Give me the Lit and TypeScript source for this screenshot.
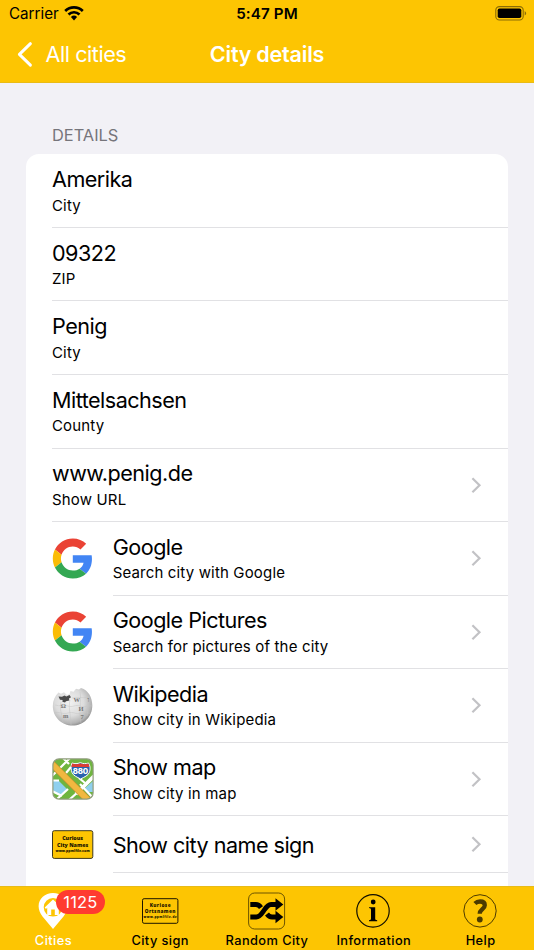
import { LitElement, html, css, nothing } from "lit";
import { customElement, property } from "lit/decorators.js";

interface Row {
  title: string;
  sub?: string;
  icon?: string;
  link?: boolean;
}

const ROWS: Row[] = [
  { title: "Amerika", sub: "City" },
  { title: "09322", sub: "ZIP" },
  { title: "Penig", sub: "City" },
  { title: "Mittelsachsen", sub: "County" },
  { title: "www.penig.de", sub: "Show URL", link: true },
  { title: "Google", sub: "Search city with Google", icon: "google", link: true },
  { title: "Google Pictures", sub: "Search for pictures of the city", icon: "google", link: true },
  { title: "Wikipedia", sub: "Show city in Wikipedia", icon: "wiki", link: true },
  { title: "Show map", sub: "Show city in map", icon: "map", link: true },
  { title: "Show city name sign", icon: "sign", link: true },
];

const google = html`<svg width="42" height="42" viewBox="0 0 42 42">
  <g transform="translate(.8 .5) scale(.8333)">
    <path fill="#EA4335" d="M24 9.5c3.54 0 6.71 1.22 9.21 3.6l6.85-6.85C35.9 2.38 30.47 0 24 0 14.62 0 6.51 5.38 2.56 13.22l7.98 6.19C12.43 13.72 17.74 9.5 24 9.5z"/>
    <path fill="#4285F4" d="M46.98 24.55c0-1.57-.15-3.09-.38-4.55H24v9.02h12.94c-.58 2.96-2.26 5.48-4.78 7.18l7.73 6c4.51-4.18 7.09-10.36 7.09-17.65z"/>
    <path fill="#FBBC05" d="M10.53 28.59c-.48-1.45-.76-2.99-.76-4.59s.27-3.14.76-4.59l-7.98-6.19C.92 16.46 0 20.12 0 24c0 3.88.92 7.54 2.56 10.78l7.97-6.19z"/>
    <path fill="#34A853" d="M24 48c6.48 0 11.93-2.13 15.89-5.81l-7.73-6c-2.15 1.45-4.92 2.3-8.16 2.3-6.26 0-11.57-4.22-13.47-9.91l-7.98 6.19C6.51 42.62 14.62 48 24 48z"/>
  </g>
</svg>`;

const wiki = html`<svg width="42" height="42" viewBox="0 0 42 42">
  <defs>
    <radialGradient id="globe" cx=".42" cy=".38" r=".66">
      <stop offset="0" stop-color="#f2f2f2"/><stop offset=".55" stop-color="#dcdcdc"/>
      <stop offset=".85" stop-color="#b4b4b4"/><stop offset="1" stop-color="#858585"/>
    </radialGradient>
  </defs>
  <path fill="url(#globe)" d="M6.500 7.500 9 8.800l3-1.500 3 2.600 2.500-.9 1-3 3 .8 2.500-3 3 .8 2-1.500C36.500 5.500 40.300 12.500 40.300 20.500 40.300 32 31.500 40.600 20.600 40.600S.8 32 .8 21C.8 15.500 3 11 6.500 7.500z"/>
  <g fill="none" stroke="#c4c4c4" stroke-width=".5">
    <path d="M3 20c5 2 9-1 13 1s8-2 12 0 8-1 12 0M2 28c5-2 9 2 14 0s8 2 13 0 7 1 10 0M9 17c-2 7 1 11 2 21M18 15c-2 8 1 16 1 25M28 7c2 8-2 20 1 31M35 11c2 6 1 13 0 20M20 13c5-2 10 1 17-1"/>
  </g>
  <path fill="#4b4b4b" d="m6.500 11.500 3.500.3 2.500-1.300 1.800 1 3.200-1.500 1.500 2.200-2 1.200.3 2.200-3.300.6-1 1.200-2.600-.6.2-1.700-2.600-.4z"/>
  <g class="glyphs">
    <text x="8.800" y="23">Ω</text><text x="21.500" y="17">W</text><text x="26.500" y="26">И</text>
    <text x="11" y="32.500">m</text><text x="28.500" y="34">7</text><text x="35.500" y="17">ו</text>
  </g>
</svg>`;

const map = html`<svg width="42" height="42" viewBox="0 0 42 42">
  <defs><clipPath id="tile"><rect x="1" y="1" width="40" height="40" rx="6"/></clipPath></defs>
  <g clip-path="url(#tile)">
    <rect width="42" height="42" fill="#6fb53f"/>
    <path fill="#8fd0ee" d="M0 22h6l9 9-6 6-9-4zM32 31l10-9v12h-7z"/>
    <g fill="none" stroke="#fff" stroke-width="2.200">
      <path d="M0 18 18 0M0 22.500h7M16 31 4 42M0 33l10 5M11 0l6 6M17 42l9-8M19 9l-5 6M28 26l14 15M27 20l6 5"/>
      <path stroke-width="3.800" d="M24 36 42 18"/>
    </g>
    <path stroke="#c58f2c" stroke-width="7" d="M-2 4 39 45"/>
    <path stroke="#f0b840" stroke-width="5.800" d="M-2 4 39 45"/>
  </g>
  <rect x=".9" y=".9" width="40.200" height="40.200" rx="6.200" fill="none" stroke="#8f9c7c" stroke-width="1.200"/>
  <path fill="#2b62ad" stroke="#fff" stroke-width="1" d="M20 5c3 1 5 .8 8.400-.3 3 1.100 5.400 1.300 8.100.3 2.500 4 1.500 7.500.8 9.500-1 3-5 4.500-8.700 6.500-3.600-2-7.400-3.300-8.600-6.500-.9-3-1.500-5.500 0-9.500z"/>
  <path fill="#dc3d34" d="M20.300 5.600c2.800.9 5.200.8 8.100-.2 2.700 1 5.300 1.100 7.900.2.600 1.100.9 2.200 1 3.400H19.400c.1-1.200.4-2.300.9-3.400z"/>
  <text class="route" x="28.300" y="15.800">880</text>
</svg>`;

const sign = html`<svg width="42" height="30" viewBox="0 0 42 30">
  <rect x=".5" y=".7" width="40.300" height="27.700" rx="1.800" fill="#fdc502" stroke="#3c381e" stroke-width="1"/>
  <g class="plate"><text x="20.600" y="9.700">Curious</text><text x="20.600" y="16.500">City Names</text><text class="url" x="20.600" y="22.200">www.ppmlfile.com</text></g>
</svg>`;

const ICONS: Record<string, unknown> = { google, wiki, map, sign };

const TABS = [
  {
    label: "Cities",
    badge: "1125",
    icon: html`<svg width="36" height="40" viewBox="0 0 36 40">
      <path fill="#fff" fill-rule="evenodd" d="M18 3C10 3 3.600 8.600 3.600 16.200c0 3.500 1.500 6.900 3.900 10.200L18 39l10.500-12.600c2.400-3.300 3.900-6.700 3.900-10.200C32.400 8.600 26 3 18 3zm0 5a9.300 9.300 0 1 1 0 18.600A9.300 9.300 0 0 1 18 8z"/>
      <path fill="#fff" d="m18 9.400-8.300 8.200 1.300 1.300 1.200-1.100v7.200h4v-5.500h3.600v5.500h4v-7.200l1.200 1.100 1.300-1.300-3-3.100v-3.700h-2.300v1.500z"/>
    </svg>`,
  },
  {
    label: "City sign",
    icon: html`<svg width="38" height="40" viewBox="0 0 38 40">
      <rect x="1.500" y="8.700" width="35.400" height="24.600" rx="1.600" fill="none" stroke="#1c1600" stroke-width="1"/>
      <g class="plate small"><text x="19.300" y="17">Kuriose</text><text x="19.300" y="22.500">Ortsnamen</text><text class="url" x="19.300" y="28">www.ppmlfile.de</text></g>
    </svg>`,
  },
  {
    label: "Random City",
    icon: html`<svg width="40" height="40" viewBox="0 0 40 40">
      <rect x="1.600" y="3" width="36" height="36" rx="6" fill="none" stroke="#5b4700" stroke-width=".9"/>
      <path fill="none" stroke="#000" stroke-width="4.800" d="M3.300 27h5.900c3.200 0 5.200-2.800 7.300-5.900s4.100-6.600 7.500-6.600h6.700M3.300 14.500h5.600c2.200 0 3.700 1.100 5.100 3.100M20 24c1.400 2 2.800 3 5 3h5.700"/>
      <path d="m28.500 8.300 7.800 6.200-7.800 6.200zm0 12.500 7.800 6.200-7.800 6.200z"/>
    </svg>`,
  },
  {
    label: "Information",
    icon: html`<svg width="40" height="40" viewBox="0 0 40 40">
      <circle cx="19" cy="20.900" r="16.200" fill="none" stroke="#100d00" stroke-width="1.200"/>
      <circle cx="19.200" cy="12" r="2.400"/>
      <path d="M15 17.200h6.200v11.400c0 1.200.4 1.500 2 1.700v.9H15v-.9c1.500-.2 2-.5 2-1.700v-8.600c0-1.300-.5-1.700-2-1.900z"/>
    </svg>`,
  },
  {
    label: "Help",
    icon: html`<svg width="40" height="40" viewBox="0 0 40 40">
      <circle cx="19" cy="20.900" r="16.200" fill="none" stroke="#4b3a00" stroke-width="1"/>
      <path fill="none" stroke="#4b3a00" stroke-width="4.300" d="M13.900 13.600c1.600-1.600 3.200-2.100 5.200-2.100 3.200 0 4.700 1.500 4.700 3.700 0 3.900-5.100 4.100-5.100 8.600"/>
      <circle cx="18.800" cy="29.500" r="2.900" fill="#4b3a00"/>
    </svg>`,
  },
];

const BASE = css`
  * { box-sizing: border-box; }
  svg { display: block; flex: none; overflow: visible; }
  svg text { font-family: "Open Sans", Inter, sans-serif; }
  .plate { text-anchor: middle; font-size: 5.3px; font-weight: 800; fill: #1c1600; }
  .plate.small { font-size: 4.7px; }
  .plate .url { font-size: 3.5px; }
  .plate.small .url { font-size: 3.1px; }
`;

@customElement("detail-row")
class DetailRow extends LitElement {
  @property({ attribute: false }) row!: Row;

  static styles = [
    BASE,
    css`
      :host { display: flex; padding-left: 26px; align-items: stretch; height: 73.55px; }
      :host([short]) { height: 57px; }
      .icon { width: 60.7px; flex: none; display: flex; align-items: center; }
      .body { flex: 1; display: flex; align-items: center; border-bottom: 1px solid #e1e1e4; padding-right: 26.5px; }
      .texts { flex: 1; padding-top: 0.5px; }
      .title { font-size: 21.6px; line-height: 26px; letter-spacing: -0.52px; white-space: nowrap; }
      .sub { font-size: 15px; line-height: 20px; letter-spacing: 0.16px; margin-top: 3.5px; white-space: nowrap; }
      .glyphs { font-size: 6.5px; font-weight: 600; fill: #777; }
      .glyphs text { font-family: "Liberation Serif", "Noto Sans", serif; }
      .route { font-family: Inter, sans-serif; font-size: 7.8px; font-weight: 800; fill: #fff; text-anchor: middle; letter-spacing: -0.2px; }
    `,
  ];

  render() {
    const r = this.row;
    return html`
      ${r.icon ? html`<div class="icon">${ICONS[r.icon]}</div>` : nothing}
      <div class="body">
        <div class="texts">
          <div class="title">${r.title}</div>
          ${r.sub ? html`<div class="sub">${r.sub}</div>` : nothing}
        </div>
        ${r.link
          ? html`<svg width="12" height="18" viewBox="0 0 12 18"><path d="m2.400 2.200 7.100 7-7.100 7" fill="none" stroke="#c2c2c5" stroke-width="2.200"/></svg>`
          : nothing}
      </div>
    `;
  }
}

@customElement("app-root")
class AppRoot extends LitElement {
  static styles = [
    BASE,
    css`
      :host {
        display: flex; flex-direction: column; height: 950px; overflow: hidden;
        background: #f2f1f6; color: #000; font-family: Inter, "Liberation Sans", sans-serif;
      }
      header { background: #fdc502; height: 83px; flex: none; border-bottom: 1px solid #eabb14; }
      .status { display: grid; grid-template-columns: 1fr auto 1fr; align-items: center; height: 27px; padding: 0 7px 0 9px; font-size: 15.2px; }
      .carrier { display: flex; align-items: center; gap: 5px; }
      .time { font-weight: 600; letter-spacing: 0.1px; margin-right: 2px; }
      .battery { justify-self: end; }
      .nav { display: grid; grid-template-columns: 1fr auto 1fr; align-items: center; height: 54px; padding: 0 17px; color: #fff; font-size: 21.6px; }
      .back { display: flex; align-items: center; gap: 11.5px; letter-spacing: -0.45px; }
      .heading { font-weight: 600; letter-spacing: -0.25px; }
      main { flex: 1; min-height: 0; overflow: hidden; padding: 42px 26px 0; }
      h2 { margin: 0 0 9px 26px; font-size: 16.4px; line-height: 20px; font-weight: 400; color: #76757b; }
      .card { background: #fff; border-radius: 13px; height: 760px; padding-top: 0.35px; }
      nav { flex: none; height: 64px; background: #fdc502; border-top: 1px solid #e8bb17; display: grid; grid-template-columns: repeat(5, 1fr); }
      .tab { display: flex; flex-direction: column; align-items: center; padding-top: 3px; font-size: 12.8px; font-weight: 500; letter-spacing: 0.42px; white-space: nowrap; }
      .tab.on { color: #fff; }
      .label { line-height: 16px; margin-top: 2.5px; }
      .pic { position: relative; }
      .badge { position: absolute; left: 20.500px; top: 0; width: 49px; height: 24px; border-radius: 12px; background: #ff3b30; color: #fff; font-size: 16.5px; line-height: 24px; text-align: center; font-weight: 400; letter-spacing: 0.2px; }
    `,
  ];

  render() {
    return html`
      <header>
        <div class="status">
          <div class="carrier">Carrier
            <svg width="20" height="15" viewBox="0 0 20 15">
              <g fill="none" stroke="#000" stroke-width="2.700"><path d="M1.200 5a12.600 12.600 0 0 1 17.600 0M4.500 8.500a7.900 7.900 0 0 1 11 0"/></g>
              <path d="M6.900 11a4.500 4.500 0 0 1 6.200 0L10 14.400z"/>
            </svg>
          </div>
          <div class="time">5:47 PM</div>
          <svg class="battery" width="32" height="16" viewBox="0 0 32 16">
            <rect x=".8" y=".6" width="27.400" height="13.400" rx="3.600" fill="none" stroke="#8b6c05" stroke-width="1.100"/>
            <rect x="2.700" y="2.500" width="23.600" height="9.600" rx="1.800"/>
            <path fill="#8b6c05" d="M29.700 5q3 2.300 0 4.600z"/>
          </svg>
        </div>
        <div class="nav">
          <div class="back">
            <svg width="17" height="26" viewBox="0 0 17 26"><path d="M13.400 2.700 2.400 13.400l11 10.700" fill="none" stroke="#fff" stroke-width="3" stroke-linecap="round" stroke-linejoin="round"/></svg>
            <span>All cities</span>
          </div>
          <div class="heading">City details</div>
        </div>
      </header>
      <main>
        <h2>DETAILS</h2>
        <div class="card">${ROWS.map((r) => html`<detail-row .row=${r} ?short=${!r.sub}></detail-row>`)}</div>
      </main>
      <nav>
        ${TABS.map(
          (t) => html`<div class="tab ${t.badge ? "on" : ""}">
            <div class="pic">${t.icon}${t.badge ? html`<span class="badge">${t.badge}</span>` : nothing}</div>
            <div class="label">${t.label}</div>
          </div>`
        )}
      </nav>
    `;
  }
}
